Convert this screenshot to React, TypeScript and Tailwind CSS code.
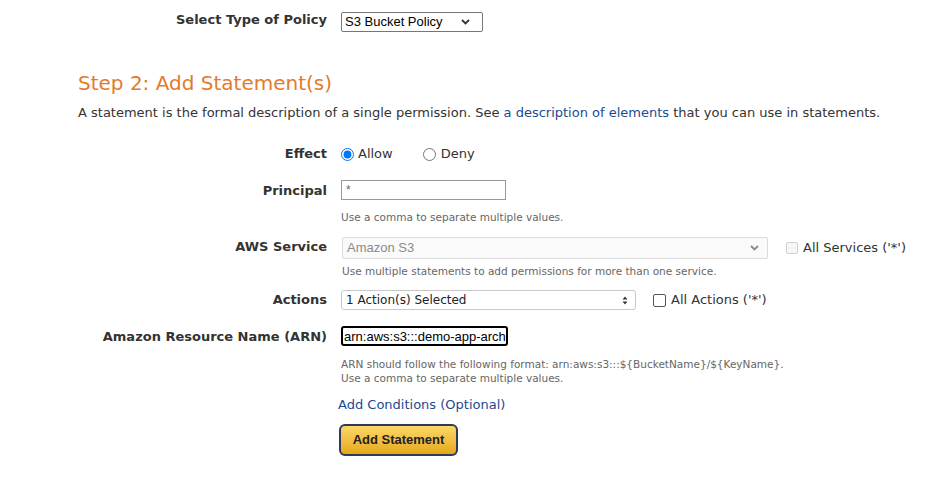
import React from "react";

const V = { fontFamily: '"DejaVu Sans", Verdana, sans-serif' };
const A = { fontFamily: '"Liberation Sans", Arial, sans-serif' };

function Chevron({ color = "#333" }: { color?: string }) {
  return (
    <svg width="9" height="6" viewBox="0 0 9 6">
      <path d="M1 1 L4.5 4.5 L8 1" fill="none" stroke={color} strokeWidth="1.8" />
    </svg>
  );
}

function Label({ children }: { children: React.ReactNode }) {
  return (
    <div className="w-[327px] shrink-0 text-right text-[13px] font-bold text-[#333]" style={V}>
      {children}
    </div>
  );
}

function Hint({ children }: { children: React.ReactNode }) {
  return (
    <div className="text-[10.5px] leading-[14px] text-[#666]" style={V}>
      {children}
    </div>
  );
}

export default function App() {
  return (
    <div className="w-[943px] h-[480px] bg-white overflow-hidden relative text-[#333]" style={V}>
      {/* Row: Select Type of Policy */}
      <div className="flex items-start pt-[12px]">
        <div className="w-[327px] shrink-0 text-right text-[13px] font-bold text-[#333] leading-[15px]" style={V}>
          Select Type of Policy
        </div>
        <div className="ml-[14px] w-[142px] h-[20px] border border-[#767676] rounded-[2px] flex items-center justify-between pl-[3px] pr-[12px] text-[13px] text-black" style={A}>
          <span>S3 Bucket Policy</span>
          <Chevron />
        </div>
      </div>

      {/* Step 2 heading */}
      <div className="pl-[78px] mt-[39px] text-[20px] leading-[24px] text-[#e47a2c]" style={V}>
        Step 2: Add Statement(s)
      </div>
      <div className="pl-[78px] mt-[10px] text-[13px] leading-[16px] text-[#333]" style={V}>
        A statement is the formal description of a single permission. See{" "}
        <span className="text-[#1b4a91]">a description of elements</span> that you can use in statements.
      </div>

      {/* Effect */}
      <div className="flex items-center mt-[24px] h-[18px]">
        <Label>Effect</Label>
        <div className="ml-[14px] flex items-center text-[13px]" style={V}>
          <input type="radio" name="eff" defaultChecked className="w-[13px] h-[13px] m-0" />
          <span className="ml-[4px]">Allow</span>
          <input type="radio" name="eff" className="w-[13px] h-[13px] m-0 ml-[30px]" />
          <span className="ml-[5px]">Deny</span>
        </div>
      </div>

      {/* Principal */}
      <div className="flex items-start mt-[17px]">
        <div className="pt-[1px]">
          <Label>Principal</Label>
        </div>
        <div className="ml-[14px]">
          <input
            readOnly
            value="*"
            className="block w-[165px] h-[20px] border border-[#999] pl-[4px] text-[12px] text-[#666] outline-none"
            style={A}
          />
          <div className="mt-[10px]">
            <Hint>Use a comma to separate multiple values.</Hint>
          </div>
        </div>
      </div>

      {/* AWS Service */}
      <div className="flex items-start mt-[13px]">
        <Label>AWS Service</Label>
        <div className="ml-[15px]">
          <div className="flex items-center">
            <div className="w-[426px] h-[22px] border border-[#dcdcdc] bg-[#fafafa] rounded-[2px] flex items-center justify-between pl-[4px] pr-[8px] text-[13px] text-[#8a8a8a]" style={A}>
              <span>Amazon S3</span>
              <Chevron color="#8a8a8a" />
            </div>
            <div className="ml-[18px] w-[12px] h-[12px] border border-[#d0d0d0] bg-[#f7f7f7] rounded-[2px]" />
            <span className="ml-[5px] text-[13px] text-[#333]" style={V}>All Services ('*')</span>
          </div>
          <div className="mt-[5px]">
            <Hint>Use multiple statements to add permissions for more than one service.</Hint>
          </div>
        </div>
      </div>

      {/* Actions */}
      <div className="flex items-center mt-[12px]">
        <Label>Actions</Label>
        <div className="ml-[14px] flex items-center">
          <div className="w-[295px] h-[20px] border border-[#c8c8c8] rounded-[3px] flex items-center justify-between pl-[4px] pr-[7px] text-[12px] text-[#222]" style={V}>
            <span>1 Action(s) Selected</span>
            <svg width="6" height="9" viewBox="0 0 6 9">
              <path d="M0.5 3.5 L3 0.5 L5.5 3.5 Z M0.5 5.5 L3 8.5 L5.5 5.5 Z" fill="#333" />
            </svg>
          </div>
          <div className="ml-[17px] w-[13px] h-[13px] border border-[#555] rounded-[2px] bg-white" />
          <span className="ml-[5px] text-[13px] text-[#333]" style={V}>All Actions ('*')</span>
        </div>
      </div>

      {/* ARN */}
      <div className="flex items-start mt-[16px]">
        <div className="pt-[1px]">
          <Label>Amazon Resource Name (ARN)</Label>
        </div>
        <div className="ml-[14px]">
          <input
            readOnly
            value="arn:aws:s3:::demo-app-archive"
            className="block w-[167px] h-[20px] border-2 border-black rounded-[3px] pl-[1px] text-[13px] text-black outline-none"
            style={A}
          />
          <div className="mt-[11px]">
            <Hint>ARN should follow the following format: arn:aws:s3:::${"{"}BucketName{"}"}/${"{"}KeyName{"}"}.</Hint>
            <Hint>Use a comma to separate multiple values.</Hint>
          </div>
        </div>
      </div>

      {/* Add Conditions */}
      <div className="ml-[338px] mt-[10px] text-[13px] text-[#1b4a91]" style={V}>
        Add Conditions (Optional)
      </div>

      {/* Add Statement button */}
      <div className="ml-[339px] mt-[9px]">
        <div
          className="w-[119px] h-[32px] rounded-[6px] border-2 border-[#2d3a5a] bg-gradient-to-b from-[#fbd865] to-[#e6a812] flex items-center justify-center text-[13px] font-bold text-[#222]"
          style={A}
        >
          Add Statement
        </div>
      </div>
    </div>
  );
}
